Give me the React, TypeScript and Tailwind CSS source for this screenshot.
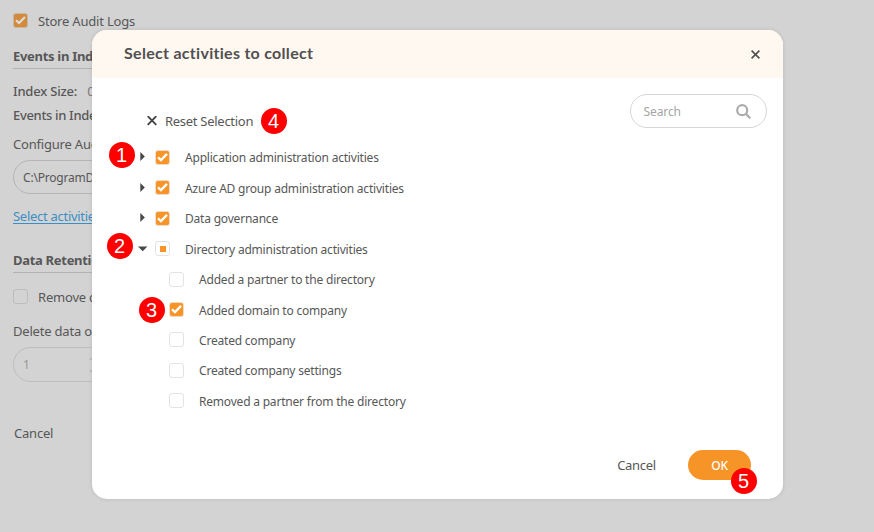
import type { ReactNode } from "react";

type State = "on" | "off" | "mixed";

function Check({ state }: { state: State }) {
  if (state === "on") {
    return (
      <span className="flex size-[15px] shrink-0 items-center justify-center rounded-[3px] border border-[#f0dcc6] bg-[#f79428]">
        <svg viewBox="0 0 11 11" className="size-[11px]" fill="none" stroke="#fff" strokeWidth="2.3">
          <path d="M1 5.3 4 8.1 10 1.9" />
        </svg>
      </span>
    );
  }
  return (
    <span className="flex size-[15px] shrink-0 items-center justify-center rounded-[3px] border border-[#e3e3e3] bg-white">
      {state === "mixed" && <span className="size-[6px] bg-[#f79428]" />}
    </span>
  );
}

function Badge({ n, className }: { n: number; className: string }) {
  return (
    <span
      className={`absolute flex size-[26px] items-center justify-center rounded-full bg-[#fe0000] font-['Liberation_Sans',sans-serif] text-[20px] leading-none tracking-normal text-white ${className}`}
    >
      {n}
    </span>
  );
}

function Row({ label, state, open, child, badge }: { label: string; state: State; open?: boolean; child?: boolean; badge?: ReactNode }) {
  return (
    <li className={`relative flex h-[30.45px] items-center ${child ? "pl-[77px]" : "pl-[46px]"}`}>
      {!child && (
        <svg viewBox="0 0 10 10" className="mr-[7px] size-[10px] shrink-0" fill="#484848">
          {open ? <path d="M0 2.5h9.4L4.7 7.3z" /> : <path d="M2.3 0v9L6.8 4.5z" />}
        </svg>
      )}
      <Check state={state} />
      <span className="ml-[15px] pt-[2px] whitespace-nowrap">{label}</span>
      {badge}
    </li>
  );
}

function Heading({ children }: { children: ReactNode }) {
  return <h3 className="h-[22px] border-b border-[#b3b3b3] text-[13px] leading-[19px] font-bold tracking-[-0.3px]">{children}</h3>;
}

export default function App() {
  return (
    <div className="relative h-[532px] w-[874px] overflow-hidden bg-[#d3d3d3] font-['Noto_Sans','Open_Sans',sans-serif] text-[13px] leading-5 tracking-[-0.2px] text-[#575757]">
      <main className="flex w-[300px] flex-col pt-[11px] pl-[13px] whitespace-nowrap">
        <div className="flex h-5 items-center">
          <span className="relative -top-px mr-[10px] flex size-[15px] items-center justify-center rounded-[3px] border border-[#c9b5a0] bg-[#d28a3d]">
            <svg viewBox="0 0 11 11" className="size-[11px]" fill="none" stroke="#ddd" strokeWidth="2.1">
              <path d="M1 5.3 4 8.1 10 1.9" />
            </svg>
          </span>
          Store Audit Logs
        </div>
        <div className="mt-4"><Heading>Events in Index</Heading></div>
        <div className="mt-3 flex gap-[10px] font-medium tracking-[-0.2px]">Index Size: <span className="font-normal text-[#777]">0</span></div>
        <div className="mt-1 font-medium tracking-[-0.33px]">Events in Index:</div>
        <div className="mt-[9px]">Configure Audit</div>
        <div className="mt-[6px] flex h-[34px] items-center rounded-full border border-[#b5b5b5] pt-px pl-[9px] text-[12px]">C:\ProgramData</div>
        <div className="mt-3 tracking-[-0.28px] text-[#3c8fc4] underline underline-offset-2">Select activities</div>
        <div className="mt-[25px]"><Heading>Data Retention</Heading></div>
        <div className="mt-[14px] flex h-5 items-center">
          <span className="relative -top-px mr-[10px] size-[15px] rounded-[3px] border border-[#bdbdbd]" />
          Remove data
        </div>
        <div className="mt-[14px]">Delete data older</div>
        <div className="mt-[6px] flex h-[35px] w-[100px] items-center justify-between rounded-full border border-[#bebebe] pr-[15px] pl-[9px] text-[12px] text-[#999]">
          1
          <svg viewBox="0 0 8 20" className="h-5 w-2" fill="#bbb"><path d="M0 5 4 1 8 5zM0 15l4 4 4-4z" /></svg>
        </div>
        <div className="mt-[41px] pl-px">Cancel</div>
      </main>

      <section className="absolute top-[30px] left-[92px] flex h-[468.5px] w-[691.4px] flex-col rounded-[15px] bg-white shadow-[0_0_4px_rgba(0,0,0,0.12)]">
        <header className="flex h-12 items-center justify-between rounded-t-[15px] bg-[#fef8f1] pr-[23.4px] pl-8">
          <h2 className="pb-[2px] font-['Lato',sans-serif] text-[16px] font-bold tracking-[0.29px] text-[#505050]">Select activities to collect</h2>
          <svg viewBox="0 0 9 9" className="size-[9px]" stroke="#505050" strokeWidth="1.6"><path d="M.6.6 8.4 8.4M8.4.6.6 8.4" /></svg>
        </header>
        <div className="flex h-[64px] justify-between pr-[16.4px] pl-[55px]">
          <div className="relative mt-[33px] flex h-5 items-center gap-2">
            <svg viewBox="0 0 10 10" className="size-[10px]" stroke="#444" strokeWidth="1.9"><path d="M.7.2 9.3 8.8M9.3.2.7 8.8" /></svg>
            <span className="tracking-[-0.28px]">Reset Selection</span>
            <Badge n={4} className="-top-[3px] left-[113.5px]" />
          </div>
          <div className="mt-4 flex h-[34px] w-[137.5px] items-center justify-between rounded-full border border-[#d6d6d6] pr-[15px] pl-[13px] text-[12px] tracking-[-0.1px] text-[#a5a5a5]">
            <span className="pt-[2px]">Search</span>
            <svg viewBox="0 0 15 15" className="size-[15px]" fill="none" stroke="#ababab" strokeWidth="2.2"><circle cx="6.2" cy="6.2" r="5" /><path d="m9.8 9.8 4.5 4.5" /></svg>
          </div>
        </div>
        <ul className="flex flex-col pt-[0.1px] text-[12px]">
          <Row label="Application administration activities" state="on" badge={<Badge n={1} className="top-[0.4px] left-[16.5px]" />} />
          <Row label="Azure AD group administration activities" state="on" />
          <Row label="Data governance" state="on" />
          <Row label="Directory administration activities" state="mixed" open badge={<Badge n={2} className="top-[-0.4px] left-[14.5px]" />} />
          <Row label="Added a partner to the directory" state="off" child />
          <Row label="Added domain to company" state="on" child badge={<Badge n={3} className="top-[2.8px] left-[46.5px]" />} />
          <Row label="Created company" state="off" child />
          <Row label="Created company settings" state="off" child />
          <Row label="Removed a partner from the directory" state="off" child />
        </ul>
        <footer className="mt-[33.8px] flex items-center justify-end gap-[32.2px] pr-[32.4px]">
          <span className="tracking-[-0.3px]">Cancel</span>
          <span className="relative flex h-[30px] w-[63px] items-center justify-center rounded-full bg-[#f79428] pt-[2px] text-[12px] font-medium text-white">
            OK
            <Badge n={5} className="top-[18.5px] left-[42.5px]" />
          </span>
        </footer>
      </section>
    </div>
  );
}
